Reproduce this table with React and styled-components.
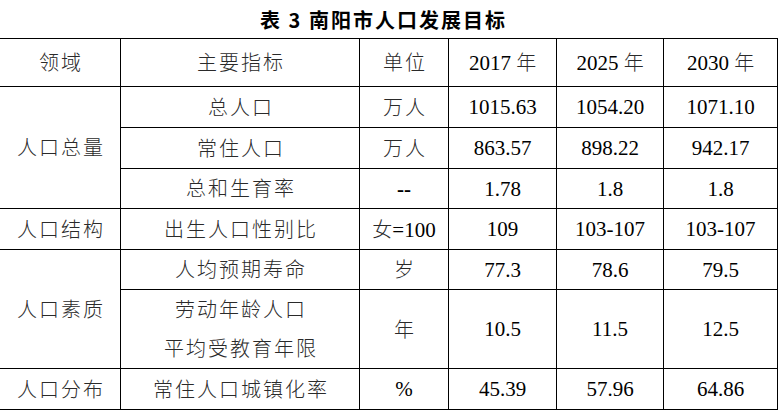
import React from 'react';
import styled, { createGlobalStyle } from 'styled-components';

const GlobalStyle = createGlobalStyle`
  html, body {
    margin: 0;
    padding: 0;
    background: #fff;
  }
  body {
    font-family: "Liberation Serif", "Noto Sans CJK SC", serif;
  }
`;

const Page = styled.div`
  width: 781px;
  height: 414px;
  overflow: hidden;
  background: #fff;
`;

const Title = styled.h1`
  margin: 0;
  height: 38px;
  display: flex;
  align-items: center;
  justify-content: center;
  padding-right: 14px;
  font-family: "Noto Sans CJK SC", sans-serif;
  font-size: 20px;
  font-weight: 700;
  letter-spacing: 2px;
  color: #000;
`;

const Table = styled.table`
  width: 778px;
  margin-left: -1px;
  border-collapse: collapse;
  table-layout: fixed;
`;

const Row = styled.tr`
  height: ${props => props.h}px;
`;

const Cell = styled.td`
  border: 1px solid #000;
  padding: 0;
  text-align: center;
  vertical-align: middle;
  color: #000;
  font-family: "Liberation Serif", "Noto Sans CJK SC", serif;
  font-size: 21px;
  line-height: 38px;
`;

const CjkText = styled.span`
  font-family: "Noto Sans CJK SC", sans-serif;
  font-size: 20px;
  font-weight: 300;
  color: #2a2a2a;
  letter-spacing: ${props => (props.tight ? 0 : 2)}px;
  margin-right: ${props => (props.tight ? 0 : -2)}px;
`;

const Dash = styled.span`
  font-weight: 700;
`;

const COLS = [121, 239, 89, 108, 107, 114];

const rows = [
  { h: 41, area: '人口总量', span: 3, name: '总人口', unit: <CjkText>万人</CjkText>, v: ['1015.63', '1054.20', '1071.10'] },
  { h: 41, name: '常住人口', unit: <CjkText>万人</CjkText>, v: ['863.57', '898.22', '942.17'] },
  { h: 40, name: '总和生育率', unit: <Dash>--</Dash>, v: ['1.78', '1.8', '1.8'] },
  {
    h: 41,
    area: '人口结构',
    span: 1,
    name: '出生人口性别比',
    unit: (
      <>
        <CjkText tight>女</CjkText>=100
      </>
    ),
    v: ['109', '103-107', '103-107'],
  },
  { h: 40, area: '人口素质', span: 2, name: '人均预期寿命', unit: <CjkText>岁</CjkText>, v: ['77.3', '78.6', '79.5'] },
  { h: 78, name: ['劳动年龄人口', '平均受教育年限'], unit: <CjkText>年</CjkText>, v: ['10.5', '11.5', '12.5'] },
  { h: 41, area: '人口分布', span: 1, name: '常住人口城镇化率', unit: '%', v: ['45.39', '57.96', '64.86'] },
];

const YearHead = ({ year }) => (
  <Cell>
    {year} <CjkText tight>年</CjkText>
  </Cell>
);

export default function App() {
  return (
    <Page>
      <GlobalStyle />
      <Title>表 3 南阳市人口发展目标</Title>
      <Table>
        <colgroup>
          {COLS.map((w, i) => (
            <col key={i} style={{ width: w }} />
          ))}
        </colgroup>
        <tbody>
          <Row h={48}>
            <Cell>
              <CjkText>领域</CjkText>
            </Cell>
            <Cell>
              <CjkText>主要指标</CjkText>
            </Cell>
            <Cell>
              <CjkText>单位</CjkText>
            </Cell>
            <YearHead year="2017" />
            <YearHead year="2025" />
            <YearHead year="2030" />
          </Row>
          {rows.map((r, i) => (
            <Row key={i} h={r.h}>
              {r.area && (
                <Cell rowSpan={r.span}>
                  <CjkText>{r.area}</CjkText>
                </Cell>
              )}
              <Cell>
                {Array.isArray(r.name) ? (
                  r.name.map((n, j) => (
                    <div key={j}>
                      <CjkText>{n}</CjkText>
                    </div>
                  ))
                ) : (
                  <CjkText>{r.name}</CjkText>
                )}
              </Cell>
              <Cell>{r.unit}</Cell>
              {r.v.map((v, j) => (
                <Cell key={j}>{v}</Cell>
              ))}
            </Row>
          ))}
        </tbody>
      </Table>
    </Page>
  );
}
